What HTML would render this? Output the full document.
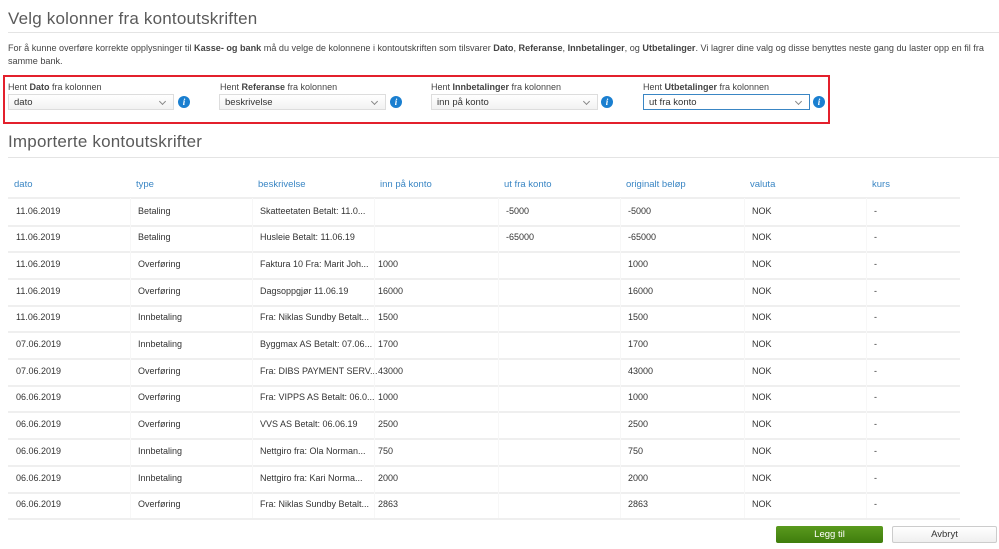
<!DOCTYPE html>
<html><head><meta charset="utf-8"><style>
*{margin:0;padding:0;box-sizing:border-box}
body{width:999px;height:549px;background:#fff;font-family:"Liberation Sans",sans-serif;color:#333;position:relative;overflow:hidden}
.a{position:absolute;white-space:nowrap}
.h1{font-size:17px;font-weight:normal;color:#5a5a5a;letter-spacing:0.2px}
.hr{position:absolute;height:1px;background:#e4e4e4}
.p{font-size:9.1px;color:#444;line-height:13px}
.lbl{font-size:9px;color:#444}
.sel{position:absolute;height:16px;border:1px solid #ddd;background:linear-gradient(#fff,#f2f2f2);font-size:9.5px;color:#333;padding:2px 5px}
.sel:after{content:"";position:absolute;right:8px;top:4px;width:4px;height:4px;border-right:1px solid #888;border-bottom:1px solid #888;transform:rotate(45deg)}
.info{position:absolute;width:12px;height:12px;border-radius:50%;background:#1a7fd0;color:#fff;font-size:9px;font-weight:bold;text-align:center;line-height:12px;font-style:italic;font-family:"Liberation Serif",serif}
.th{font-size:9.5px;color:#3a86c4}
.td{font-size:9px;color:#333}
.row{position:absolute;left:8px;width:952px;height:2px;background:#efefef}
.vl{position:absolute;width:1px;background:#f7f7f7}
</style></head><body>
<div class="a h1" style="left:8px;top:9px">Velg kolonner fra kontoutskriften</div>
<div class="hr" style="left:8px;top:32px;width:991px"></div>
<div class="a p" style="left:8px;top:42px">For å kunne overføre korrekte opplysninger til <b>Kasse- og bank</b> må du velge de kolonnene i kontoutskriften som tilsvarer <b>Dato</b>, <b>Referanse</b>, <b>Innbetalinger</b>, og <b>Utbetalinger</b>. Vi lagrer dine valg og disse benyttes neste gang du laster opp en fil fra<br>samme bank.</div>
<div class="a" style="left:3px;top:75px;width:827px;height:49px;border:2px solid #e3202c"></div>
<div class="a lbl" style="left:8px;top:82px">Hent <b>Dato</b> fra kolonnen</div>
<div class="sel" style="left:8px;top:94px;width:166px">dato</div><div class="info" style="left:178px;top:96px">i</div>
<div class="a lbl" style="left:220px;top:82px">Hent <b>Referanse</b> fra kolonnen</div>
<div class="sel" style="left:219px;top:94px;width:167px">beskrivelse</div><div class="info" style="left:390px;top:96px">i</div>
<div class="a lbl" style="left:431px;top:82px">Hent <b>Innbetalinger</b> fra kolonnen</div>
<div class="sel" style="left:431px;top:94px;width:167px">inn på konto</div><div class="info" style="left:601px;top:96px">i</div>
<div class="a lbl" style="left:643px;top:82px">Hent <b>Utbetalinger</b> fra kolonnen</div>
<div class="sel" style="left:643px;top:94px;width:167px;border-color:#3a86c4;background:#fff">ut fra konto</div><div class="info" style="left:813px;top:96px">i</div>
<div class="a h1" style="left:8px;top:132px">Importerte kontoutskrifter</div>
<div class="hr" style="left:8px;top:157px;width:991px"></div>
<div class="row" style="top:197px"></div>
<div id="t"></div>
<div class="a" style="left:776px;top:526px;width:107px;height:17px;background:linear-gradient(#5a9a1e,#3f7d0c);border-radius:2px;color:#fff;font-size:9.5px;text-align:center;line-height:17px">Legg til</div>
<div class="a" style="left:892px;top:526px;width:105px;height:17px;background:linear-gradient(#fff,#efefef);border:1px solid #ccc;border-radius:2px;color:#333;font-size:9.5px;text-align:center;line-height:15px">Avbryt</div>
<script>
var H=["dato","type","beskrivelse","inn på konto","ut fra konto","originalt beløp","valuta","kurs"];
var R=[["11.06.2019","Betaling","Skatteetaten Betalt: 11.0...","","-5000","-5000"],
["11.06.2019","Betaling","Husleie Betalt: 11.06.19","","-65000","-65000"],
["11.06.2019","Overføring","Faktura 10 Fra: Marit Joh...","1000","","1000"],
["11.06.2019","Overføring","Dagsoppgjør 11.06.19","16000","","16000"],
["11.06.2019","Innbetaling","Fra: Niklas Sundby Betalt...","1500","","1500"],
["07.06.2019","Innbetaling","Byggmax AS Betalt: 07.06...","1700","","1700"],
["07.06.2019","Overføring","Fra: DIBS PAYMENT SERV...","43000","","43000"],
["06.06.2019","Overføring","Fra: VIPPS AS Betalt: 06.0...","1000","","1000"],
["06.06.2019","Overføring","VVS AS Betalt: 06.06.19","2500","","2500"],
["06.06.2019","Innbetaling","Nettgiro fra: Ola Norman...","750","","750"],
["06.06.2019","Innbetaling","Nettgiro fra: Kari Norma...","2000","","2000"],
["06.06.2019","Overføring","Fra: Niklas Sundby Betalt...","2863","","2863"]];
var X=[14,136,258,380,504,626,750,872],s="";
H.forEach(function(h,i){s+='<div class="a th" style="left:'+X[i]+'px;top:179px">'+h+'</div>';});
R.forEach(function(r,j){var y=205.5+j*26.7;r=r.concat(["NOK","-"]);
r.forEach(function(c,i){s+='<div class="a td" style="left:'+(X[i]+2+(i==3?-4:0))+'px;top:'+y+'px">'+c+'</div>';});
s+='<div class="row" style="top:'+(y+19)+'px"></div>';});
for(var i=1;i<8;i++)s+='<div class="vl" style="left:'+(X[i]-6)+'px;top:198px;height:320px"></div>';
document.getElementById("t").innerHTML=s;
</script>
</body></html>
